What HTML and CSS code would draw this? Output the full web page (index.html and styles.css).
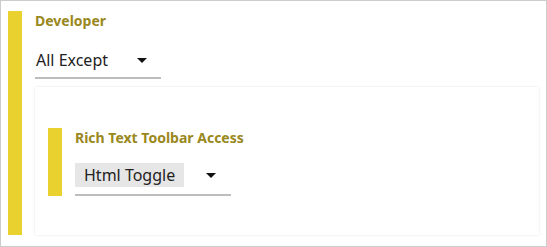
FILE: index.html
```html
<!DOCTYPE html>
<html>
<head>
<meta charset="utf-8">
<link rel="stylesheet" href="styles.css">
</head>
<body>
<div class="frame">
  <div class="group">
    <div class="bar"></div>
    <div class="content">
      <div class="title">Developer</div>
      <div class="select">
        <span class="value">All Except</span>
        <span class="arrow"></span>
      </div>
      <div class="card">
        <div class="group">
          <div class="bar"></div>
          <div class="content">
            <div class="title">Rich Text Toolbar Access</div>
            <div class="select select-inner">
              <span class="chip">Html Toggle</span>
              <span class="arrow"></span>
            </div>
          </div>
        </div>
      </div>
    </div>
  </div>
</div>
</body>
</html>
```

FILE: styles.css
```css
html, body {
  margin: 0;
  padding: 0;
  background: #fff;
}
body {
  font-family: "Noto Sans", "Open Sans", sans-serif;
  color: #222;
}
.frame {
  width: 547px;
  height: 247px;
  box-sizing: border-box;
  border: 1px solid #cccccc;
  padding: 10px 7px 11px 7px;
  display: flex;
}
.group {
  display: flex;
  align-items: stretch;
  flex: 1;
}
.bar {
  width: 14px;
  flex: none;
  background: #e9d230;
}
.content {
  flex: 1;
  margin-left: 13px;
  display: flex;
  flex-direction: column;
}
.title {
  font-size: 14px;
  font-weight: 700;
  line-height: 20px;
  color: #9a8820;
}
.select {
  margin-top: 17px;
  width: 126px;
  box-sizing: border-box;
  display: flex;
  align-items: center;
  justify-content: space-between;
  padding: 0 14px 5px 0;
  border-bottom: 2px solid #bdbdbd;
  font-size: 16px;
  line-height: 24px;
}
.value {
  padding-left: 1px;
}
.arrow {
  width: 0;
  height: 0;
  border-left: 5px solid transparent;
  border-right: 5px solid transparent;
  border-top: 5px solid #111;
}
.card {
  margin-top: 8px;
  flex: 1;
  background: #fff;
  box-shadow: 0 0 2px rgba(0, 0, 0, 0.13);
  padding: 41px 13px 39px 13px;
  display: flex;
}
.select-inner {
  margin-top: 15px;
  width: 156px;
  padding: 0 15px 7px 0;
}
.chip {
  background: #e6e6e6;
  padding: 0 9px;
  line-height: 24px;
}
```
